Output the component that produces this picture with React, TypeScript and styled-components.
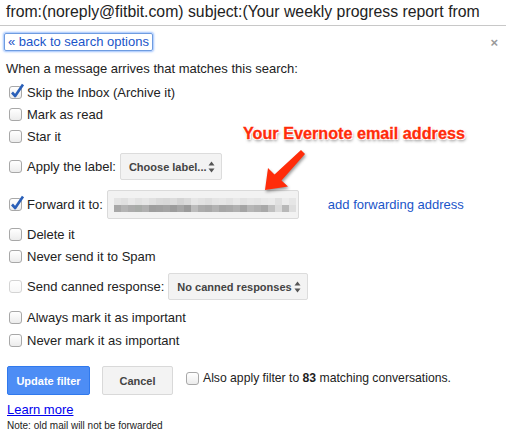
import styled, { createGlobalStyle } from 'styled-components'

const GlobalStyle = createGlobalStyle`
	body {
		margin: 0;
		background: #fff;
		font-family: "Liberation Sans", Arial, sans-serif;
		font-size: 13px;
		color: #222;
	}
`

const Page = styled.div`
	position: relative;
	width: 506px;
	height: 438px;
	overflow: hidden;
`

const Header = styled.div`
	height: 25px;
	line-height: 24px;
	padding-left: 6px;
	font-size: 15.8px;
	color: #222;
	white-space: nowrap;
	overflow: hidden;
	border-bottom: 1px solid #c8c8c8;
`

const TopBar = styled.div`
	display: flex;
	justify-content: space-between;
	align-items: center;
	padding: 7px 8px 0 4px;
	height: 18px;
`

const BackLink = styled.a`
	display: inline-block;
	height: 16px;
	line-height: 15px;
	padding: 0 3px;
	border: 1px solid #6f9ce0;
	border-radius: 2px;
	box-shadow: 0 0 2px 1px rgba(77, 144, 254, 0.55);
	color: #1a55c9;
	text-decoration: none;
	font-size: 13px;
`

const Close = styled.span`
	font-size: 13px;
	font-weight: bold;
	color: #9a9a9a;
	margin-top: 1px;
`

const Intro = styled.div`
	padding: 10px 0 0 6px;
	height: 15px;
	line-height: 15px;
`

const List = styled.div`
	display: flex;
	flex-direction: column;
	padding: 5px 0 0 9px;
`

const Row = styled.div<{ $h: number }>`
	display: flex;
	align-items: center;
	gap: 5px;
	height: ${p => p.$h}px;
	white-space: nowrap;
`

const Box = styled.span<{ $disabled?: boolean }>`
	position: relative;
	flex: none;
	width: 11px;
	height: 11px;
	border: 1px solid ${p => (p.$disabled ? '#d4d4d4' : '#a8a8a8')};
	border-radius: 3px;
	background: linear-gradient(#fff, ${p => (p.$disabled ? '#f7f7f7' : '#ececec')});

	svg {
		position: absolute;
		left: 0px;
		top: -4px;
	}
`

const Label = styled.span`
	color: #222;
`

const Select = styled.span<{ $w: number }>`
	display: flex;
	align-items: center;
	justify-content: space-between;
	box-sizing: border-box;
	width: ${p => p.$w}px;
	height: 27px;
	margin-left: -1px;
	padding: 0 6px 0 8px;
	border: 1px solid #dcdcdc;
	border-radius: 2px;
	background: #f3f3f3;
	font-size: 11px;
	font-weight: bold;
	color: #444;
`

const Input = styled.div`
	display: flex;
	flex-direction: column;
	justify-content: center;
	box-sizing: border-box;
	width: 192px;
	height: 29px;
	margin-left: -1px;
	padding-left: 6px;
	border: 1px solid #dadada;
	border-radius: 2px;
	background: #f2f2f2;
`

const PixelLine = styled.div`
	display: flex;
	height: 7px;
`

const Pixel = styled.span<{ $c: string }>`
	width: 7px;
	height: 7px;
	background: ${p => p.$c};
`

const AddLink = styled.a`
	margin-left: 24px;
	color: #1a55c9;
	text-decoration: none;
`

const Footer = styled.div`
	display: flex;
	align-items: flex-start;
	gap: 12px;
	padding: 15px 0 0 7px;
`

const Button = styled.button<{ $primary?: boolean }>`
	box-sizing: border-box;
	height: 29px;
	padding: 0;
	border-radius: 2px;
	border: 1px solid ${p => (p.$primary ? '#3079ed' : '#d9d9d9')};
	background: ${p => (p.$primary ? '#4d8df5' : '#f3f3f3')};
	color: ${p => (p.$primary ? '#fff' : '#444')};
	font-family: "Liberation Sans", Arial, sans-serif;
	font-size: 11px;
	font-weight: bold;
	width: ${p => (p.$primary ? 83 : 71)}px;
`

const ApplyAll = styled.div`
	display: flex;
	align-items: center;
	gap: 4px;
	margin-left: 1px;
	padding-top: 5px;
	white-space: nowrap;
	font-size: 12.2px;

	b {
		font-weight: bold;
	}
`

const LearnMore = styled.a`
	display: block;
	margin: 7px 0 0 7px;
	color: #0000ee;
	text-decoration: underline;
	font-size: 13px;
	line-height: 15px;
`

const Note = styled.div`
	margin: 3px 0 0 7px;
	font-size: 10px;
	color: #222;
`

const Callout = styled.div`
	position: absolute;
	left: 243px;
	top: 124px;
	font-size: 16.2px;
	font-weight: bold;
	color: #ff2c0a;
	white-space: nowrap;
	-webkit-text-stroke: 0.3px #ff2c0a;
	text-shadow: 0 0 2px #fff, 1px 1px 0 #fff, -1px -1px 0 #fff, 1px -1px 0 #fff, -1px 1px 0 #fff, 1px 2px 3px rgba(0, 0, 0, 0.5);
`

const Arrow = styled.svg`
	position: absolute;
	left: 255px;
	top: 145px;
	filter: drop-shadow(1px 2px 1.5px rgba(0, 0, 0, 0.4));
`

const Check = () => (
	<svg width="15" height="16" viewBox="0 0 15 16">
		<path d="M2 9.5 L5.2 13 L13 1.5" fill="none" stroke="#2a5fb8" strokeWidth="2.6" strokeLinejoin="round" />
	</svg>
)

const Spinner = () => (
	<svg width="7" height="12" viewBox="0 0 7 12">
		<path d="M3.5 0.5 L6.5 4.5 H0.5 Z M3.5 11.5 L6.5 7.5 H0.5 Z" fill="#555" />
	</svg>
)

const topPixels = ['#e4e4e4', '#e0e0e0', '#e8e8e8', '#e2e2e2', '#e6e6e6', '#e0e0e0', '#dadada', '#d8d8d8', '#dcdcdc', '#d4d4d4', '#dadada', '#e6e6e6', '#e2e2e2', '#dedede', '#e4e4e4', '#e6e6e6', '#e2e2e2', '#e8e8e8', '#e2e2e2', '#e6e6e6', '#e4e4e4', '#e8e8e8', '#eaeaea', '#e0e0e0', '#ececec', '#e6e6e6']
const bottomPixels = ['#a8a8a8', '#b4b4b4', '#acacac', '#a8aba8', '#b0b0b0', '#9e9e9e', '#a0a0a0', '#a4a4a4', '#9c9c9c', '#a6a6a6', '#9a9a9a', '#bcbcbc', '#acacac', '#a8a8a8', '#b2b2b2', '#a6a6a6', '#a9a9a9', '#b0b0b0', '#a4a4a4', '#b6b6b6', '#b0b0b0', '#a8a8a8', '#c0c0c0', '#dadada', '#b8b8b8', '#dedede']

export default function App() {
	return (
		<Page>
			<GlobalStyle />
			<Header>from:(noreply@fitbit.com) subject:(Your weekly progress report from</Header>
			<TopBar>
				<BackLink>« back to search options</BackLink>
				<Close>×</Close>
			</TopBar>
			<Intro>When a message arrives that matches this search:</Intro>
			<List>
				<Row $h={22}>
					<Box><Check /></Box>
					<Label>Skip the Inbox (Archive it)</Label>
				</Row>
				<Row $h={22}>
					<Box />
					<Label>Mark as read</Label>
				</Row>
				<Row $h={23}>
					<Box />
					<Label>Star it</Label>
				</Row>
				<Row $h={37}>
					<Box />
					<Label>Apply the label:</Label>
					<Select $w={102}>Choose label... <Spinner /></Select>
				</Row>
				<Row $h={39}>
					<Box><Check /></Box>
					<Label>Forward it to:</Label>
					<Input>
						<PixelLine>{topPixels.map((c, i) => <Pixel key={i} $c={c} />)}</PixelLine>
						<PixelLine>{bottomPixels.map((c, i) => <Pixel key={i} $c={c} />)}</PixelLine>
					</Input>
					<AddLink>add forwarding address</AddLink>
				</Row>
				<Row $h={21}>
					<Box />
					<Label>Delete it</Label>
				</Row>
				<Row $h={23}>
					<Box />
					<Label>Never send it to Spam</Label>
				</Row>
				<Row $h={37}>
					<Box $disabled />
					<Label>Send canned response:</Label>
					<Select $w={140}>No canned responses <Spinner /></Select>
				</Row>
				<Row $h={24}>
					<Box />
					<Label>Always mark it as important</Label>
				</Row>
				<Row $h={22}>
					<Box />
					<Label>Never mark it as important</Label>
				</Row>
			</List>
			<Footer>
				<Button $primary>Update filter</Button>
				<Button>Cancel</Button>
				<ApplyAll>
					<Box />
					<span>Also apply filter to <b>83</b> matching conversations.</span>
				</ApplyAll>
			</Footer>
			<LearnMore>Learn more</LearnMore>
			<Note>Note: old mail will not be forwarded</Note>

			<Callout>Your Evernote email address</Callout>
			<Arrow width="60" height="50" viewBox="0 0 60 50">
				<path d="M46 5 L50 9 L26.5 35.5 L33 41.5 L10 45 L13 23 L19.5 29.5 Z" fill="#ff2c0a" />
			</Arrow>
		</Page>
	)
}
